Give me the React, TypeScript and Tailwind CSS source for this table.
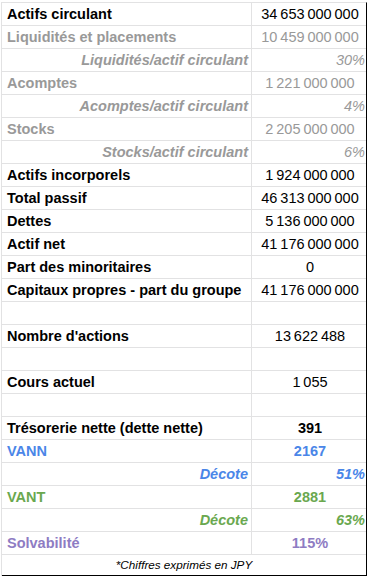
type Row = {
  label?: string
  value?: string
  kind?: 'main' | 'sub' | 'ratio' | 'empty'
  color?: string
  boldValue?: boolean
}

const GRAY = 'text-[#999999]'

const rows: Row[] = [
  { label: 'Actifs circulant', value: '34\u2009653\u2009000\u2009000', kind: 'main' },
  { label: 'Liquidités et placements', value: '10\u2009459\u2009000\u2009000', kind: 'sub' },
  { label: 'Liquidités/actif circulant', value: '30%', kind: 'ratio', color: GRAY },
  { label: 'Acomptes', value: '1\u2009221\u2009000\u2009000', kind: 'sub' },
  { label: 'Acomptes/actif circulant', value: '4%', kind: 'ratio', color: GRAY },
  { label: 'Stocks', value: '2\u2009205\u2009000\u2009000', kind: 'sub' },
  { label: 'Stocks/actif circulant', value: '6%', kind: 'ratio', color: GRAY },
  { label: 'Actifs incorporels', value: '1\u2009924\u2009000\u2009000', kind: 'main' },
  { label: 'Total passif', value: '46\u2009313\u2009000\u2009000', kind: 'main' },
  { label: 'Dettes', value: '5\u2009136\u2009000\u2009000', kind: 'main' },
  { label: 'Actif net', value: '41\u2009176\u2009000\u2009000', kind: 'main' },
  { label: 'Part des minoritaires', value: '0', kind: 'main' },
  { label: 'Capitaux propres - part du groupe', value: '41\u2009176\u2009000\u2009000', kind: 'main' },
  { kind: 'empty' },
  { label: "Nombre d'actions", value: '13\u2009622\u2009488', kind: 'main' },
  { kind: 'empty' },
  { label: 'Cours actuel', value: '1\u2009055', kind: 'main' },
  { kind: 'empty' },
  { label: 'Trésorerie nette (dette nette)', value: '391', kind: 'main', boldValue: true },
  { label: 'VANN', value: '2167', kind: 'main', color: 'text-[#4a86e8]', boldValue: true },
  { label: 'Décote', value: '51%', kind: 'ratio', color: 'text-[#4a86e8]', boldValue: true },
  { label: 'VANT', value: '2881', kind: 'main', color: 'text-[#6aa84f]', boldValue: true },
  { label: 'Décote', value: '63%', kind: 'ratio', color: 'text-[#6aa84f]', boldValue: true },
  { label: 'Solvabilité', value: '115%', kind: 'main', color: 'text-[#8e7cc3]', boldValue: true },
]

function SheetRow({ row }: { row: Row }) {
  const color = row.kind === 'sub' ? GRAY : row.color ?? 'text-black'

  if (row.kind === 'ratio') {
    return (
      <div className="flex h-[23px] border-b border-[#e2e2e3]">
        <div className={`flex w-[250px] items-center justify-end border-r border-[#e2e2e3] pr-[3px] font-bold italic ${color}`}>
          {row.label}
        </div>
        <div className={`flex flex-1 items-center justify-end pr-[1px] italic ${color} ${row.boldValue ? 'font-bold' : ''}`}>
          {row.value}
        </div>
      </div>
    )
  }

  return (
    <div className="flex h-[23px] border-b border-[#e2e2e3]">
      <div className={`flex w-[250px] items-center border-r border-[#e2e2e3] pl-[5px] font-bold ${color}`}>
        {row.label}
      </div>
      <div className={`flex flex-1 items-center justify-center pl-[2px] ${color} ${row.boldValue ? 'font-bold' : ''}`}>
        {row.value}
      </div>
    </div>
  )
}

export default function App() {
  return (
    <div className="h-[577px] w-[371px] bg-white pt-[2px] text-[14.5px] leading-none" style={{ fontFamily: '"Liberation Sans", Arial, sans-serif' }}>
      <div className="ml-[1px] w-[366px] border-t border-l border-r border-t-[#e2e2e3] border-l-[#e2e2e3] border-r-black">
        {rows.map((row, i) => (
          <SheetRow key={i} row={row} />
        ))}
        <div className="flex h-[21px] items-center justify-center border-b border-black text-[11.7px] italic text-black">
          *Chiffres exprimés en JPY
        </div>
      </div>
    </div>
  )
}
